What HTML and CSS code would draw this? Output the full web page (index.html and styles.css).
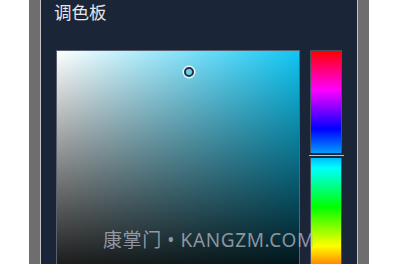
FILE: index.html
```html
<!DOCTYPE html>
<html lang="zh">
<head>
<meta charset="utf-8">
<link rel="stylesheet" href="styles.css">
</head>
<body>
<div class="frame">
  <div class="panel">
    <div class="title">调色板</div>
    <div class="picker">
      <div class="sv">
        <div class="cursor"></div>
      </div>
      <div class="hue">
        <div class="handle"></div>
      </div>
    </div>
  </div>
</div>
<div class="watermark">康掌门 • KANGZM.COM</div>
</body>
</html>
```
FILE: styles.css
```css
html, body {
  margin: 0;
  padding: 0;
  background: #ffffff;
  overflow: hidden;
}
body {
  width: 417px;
  height: 264px;
  position: relative;
  font-family: "Noto Sans", "Noto Sans CJK SC", sans-serif;
}
.frame {
  margin-left: 29px;
  width: 318px;
  height: 264px;
  padding: 0 11px;
  background: #6e6e6e;
}
.panel {
  height: 100%;
  background: #1b2538;
  border-left: 1px solid #c4c4c4;
  border-right: 1px solid #c4c4c4;
  overflow: hidden;
}
.title {
  font-family: "Noto Sans CJK SC", sans-serif;
  font-size: 17.5px;
  font-weight: 400;
  line-height: 20px;
  padding-top: 2px;
  color: #e4e6ea;
  padding-left: 13px;
}
.picker {
  display: flex;
  gap: 10px;
  margin-top: 28px;
  padding-left: 15px;
}
.sv {
  position: relative;
  width: 242px;
  height: 240px;
  border: 1px solid #5a6272;
  background:
    linear-gradient(to top, #000000, rgba(0,0,0,0)),
    linear-gradient(to right, #ffffff, #10c6f4);
}
.cursor {
  position: absolute;
  left: 127px;
  top: 16px;
  width: 6px;
  height: 6px;
  border: 2px solid #23364a;
  border-radius: 50%;
  box-shadow: 0 0 0 1.5px rgba(255,255,255,0.85);
}
.hue {
  position: relative;
  width: 30px;
  height: 240px;
  border: 1px solid #4a5060;
  background: linear-gradient(to bottom,
    #ff0000 0px,
    #ff00ff 39px,
    #0000ff 78px,
    #00ffff 117px,
    #00ff00 156px,
    #ffff00 195px,
    #ff0000 234px);
}
.handle {
  position: absolute;
  left: -2px;
  right: -3px;
  top: 102px;
  height: 1px;
  background: #7fd4f4;
  border-top: 2px solid #1d2a3a;
  border-bottom: 2px solid #1d2a3a;
}
.watermark {
  position: absolute;
  left: 103px;
  top: 228px;
  font-family: "Noto Sans", "Noto Sans CJK SC", sans-serif;
  font-size: 19px;
  letter-spacing: 0.6px;
  line-height: 24px;
  color: rgba(190, 190, 205, 0.72);
  white-space: nowrap;
}
```
